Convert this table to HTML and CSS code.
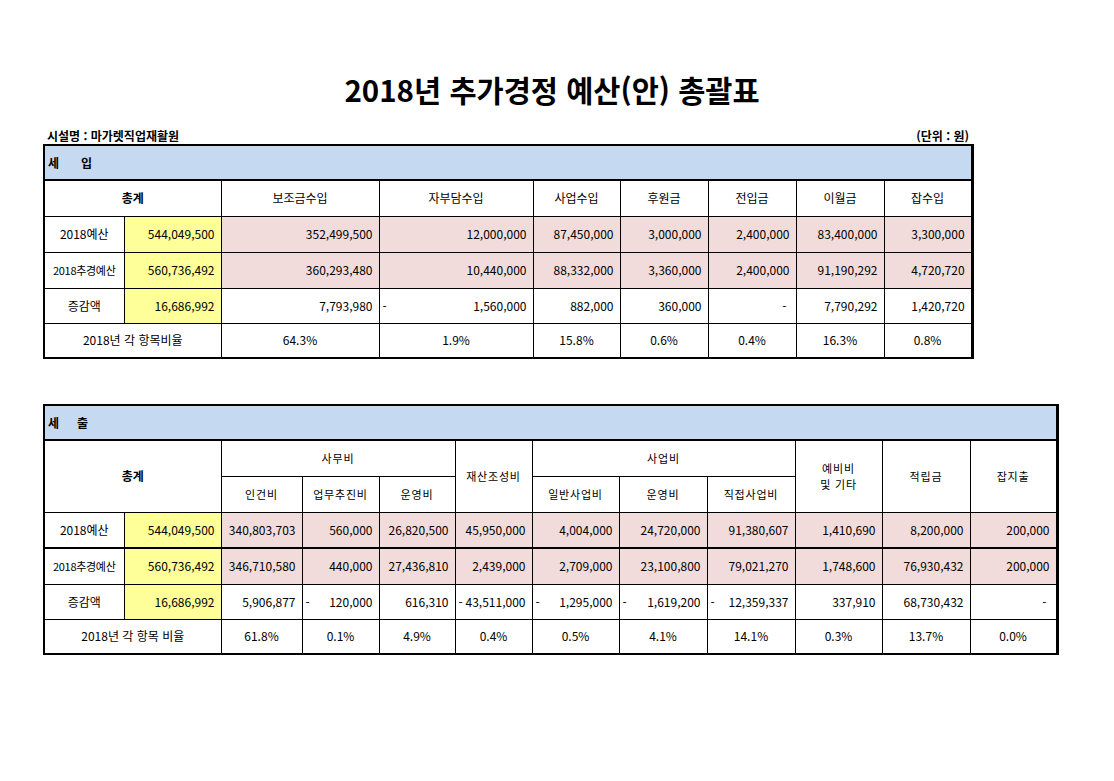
FILE: index.html
```html
<!DOCTYPE html>
<html lang="ko">
<head>
<meta charset="utf-8">
<title>2018년 추가경정 예산(안) 총괄표</title>
<link rel="stylesheet" href="styles.css">
</head>
<body>
<h1 class="title">2018년 추가경정 예산(안) 총괄표</h1>
<main class="sheets">
  <div class="meta"><span>시설명 : 마가렛직업재활원</span><span>(단위 : 원)</span></div>

  <table class="sheet t1">
    <colgroup>
      <col class="w80"><col class="w97"><col class="w158"><col class="w154"><col class="w87"><col class="w88"><col class="w88"><col class="w88"><col class="w88">
    </colgroup>
    <tr class="band h35"><td colspan="9"><span class="b1">세</span><span>입</span></td></tr>
    <tr class="head h36"><th colspan="2" class="bold">총계</th><th>보조금수입</th><th>자부담수입</th><th>사업수입</th><th>후원금</th><th>전입금</th><th>이월금</th><th>잡수입</th></tr>
    <tr class="h36"><td class="lbl">2018예산</td><td class="tot">544,049,500</td><td class="pk">352,499,500</td><td class="pk">12,000,000</td><td class="pk">87,450,000</td><td class="pk">3,000,000</td><td class="pk">2,400,000</td><td class="pk">83,400,000</td><td class="pk">3,300,000</td></tr>
    <tr class="h36"><td class="lbl sm">2018추경예산</td><td class="tot">560,736,492</td><td class="pk">360,293,480</td><td class="pk">10,440,000</td><td class="pk">88,332,000</td><td class="pk">3,360,000</td><td class="pk">2,400,000</td><td class="pk">91,190,292</td><td class="pk">4,720,720</td></tr>
    <tr class="h35"><td class="lbl">증감액</td><td class="tot">16,686,992</td><td class="num">7,793,980</td><td class="num"><span class="dash">-</span>1,560,000</td><td class="num">882,000</td><td class="num">360,000</td><td class="num nil">-</td><td class="num">7,790,292</td><td class="num">1,420,720</td></tr>
    <tr class="pct h35"><td colspan="2">2018년 각 항목비율</td><td>64.3%</td><td>1.9%</td><td>15.8%</td><td>0.6%</td><td>0.4%</td><td>16.3%</td><td>0.8%</td></tr>
  </table>

  <table class="sheet t2">
    <colgroup>
      <col class="w80"><col class="w97"><col class="w81"><col class="w77"><col class="w76"><col class="w77"><col class="w87"><col class="w88"><col class="w88"><col class="w87"><col class="w88"><col class="w87">
    </colgroup>
    <tr class="band h35"><td colspan="12"><span class="b2">세</span><span>출</span></td></tr>
    <tr class="head h2 h36"><th colspan="2" rowspan="2" class="bold">총계</th><th colspan="3">사무비</th><th rowspan="2">재산조성비</th><th colspan="3">사업비</th><th rowspan="2" class="two">예비비<br>및 기타</th><th rowspan="2">적립금</th><th rowspan="2">잡지출</th></tr>
    <tr class="head h2 h36"><th>인건비</th><th>업무추진비</th><th>운영비</th><th>일반사업비</th><th>운영비</th><th>직접사업비</th></tr>
    <tr class="h36 thick"><td class="lbl">2018예산</td><td class="tot">544,049,500</td><td class="pk">340,803,703</td><td class="pk">560,000</td><td class="pk">26,820,500</td><td class="pk">45,950,000</td><td class="pk">4,004,000</td><td class="pk">24,720,000</td><td class="pk">91,380,607</td><td class="pk">1,410,690</td><td class="pk">8,200,000</td><td class="pk">200,000</td></tr>
    <tr class="h36"><td class="lbl sm">2018추경예산</td><td class="tot">560,736,492</td><td class="pk">346,710,580</td><td class="pk">440,000</td><td class="pk">27,436,810</td><td class="pk">2,439,000</td><td class="pk">2,709,000</td><td class="pk">23,100,800</td><td class="pk">79,021,270</td><td class="pk">1,748,600</td><td class="pk">76,930,432</td><td class="pk">200,000</td></tr>
    <tr class="h35"><td class="lbl">증감액</td><td class="tot">16,686,992</td><td class="num">5,906,877</td><td class="num"><span class="dash">-</span>120,000</td><td class="num">616,310</td><td class="num"><span class="dash">-</span>43,511,000</td><td class="num"><span class="dash">-</span>1,295,000</td><td class="num"><span class="dash">-</span>1,619,200</td><td class="num"><span class="dash">-</span>12,359,337</td><td class="num">337,910</td><td class="num">68,730,432</td><td class="num nil">-</td></tr>
    <tr class="pct h35"><td colspan="2">2018년 각 항목 비율</td><td>61.8%</td><td>0.1%</td><td>4.9%</td><td>0.4%</td><td>0.5%</td><td>4.1%</td><td>14.1%</td><td>0.3%</td><td>13.7%</td><td>0.0%</td></tr>
  </table>
</main>
</body>
</html>
```

FILE: styles.css
```css
* { box-sizing: border-box; }
body {
  margin: 0;
  background: #fff;
  color: #000;
  font-family: "Noto Sans CJK KR", sans-serif;
}
.title {
  margin: 69px 0 0 0;
  padding-right: 10px;
  font-size: 29.5px;
  font-weight: 700;
  line-height: 40px;
  text-align: center;
}
.sheets {
  padding-left: 43px;
}
.meta {
  display: flex;
  justify-content: space-between;
  width: 929px;
  margin-top: 19px;
  height: 16px;
  line-height: 16px;
  font-size: 12px;
  font-weight: 700;
  padding: 0 3px 0 4px;
}
.sheet {
  border-collapse: collapse;
  table-layout: fixed;
  border: 2px solid #000;
  border-right-width: 3px;
  font-size: 12px;
  line-height: 16px;
}
.t1 { width: 928px; }
.t2 { width: 1013px; margin-top: 45px; }
.w76 { width: 76px; }
.w77 { width: 77px; }
.w80 { width: 80px; }
.w81 { width: 81px; }
.w87 { width: 87px; }
.w88 { width: 88px; }
.w97 { width: 97px; }
.w154 { width: 154px; }
.w158 { width: 158px; }
.sheet td, .sheet th {
  border: 1px solid #000;
  padding: 0 6px;
  font-weight: 400;
  white-space: nowrap;
  overflow: hidden;
  text-align: right;
}
.h35 { height: 35px; }
.h36 { height: 36px; }
.sheet .band td {
  background: #c5d9f1;
  text-align: left;
  padding-left: 3px;
  font-weight: 700;
  border-bottom: 2px solid #000;
}
.b1 { margin-right: 22px; }
.b2 { margin-right: 18px; }
.sheet .head th { text-align: center; }
.sheet .head th.bold { font-weight: 700; }
.sheet .h2 th {
  font-size: 11px;
  letter-spacing: 0.8px;
}
.sheet .h2 th.bold { font-size: 12px; letter-spacing: 0; }
.sheet td.lbl { text-align: center; padding: 0 2px; }
.sheet td.sm { font-size: 11px; letter-spacing: -0.3px; }
.sheet td.tot { background: #ffff99; }
.sheet td.pk { background: #f2dcdb; }
.sheet td.nil { padding-right: 9px; }
.dash { float: left; margin-left: -3px; }
.sheet .pct td { text-align: center; }
.sheet .thick td { border-bottom: 2px solid #000; }
```
